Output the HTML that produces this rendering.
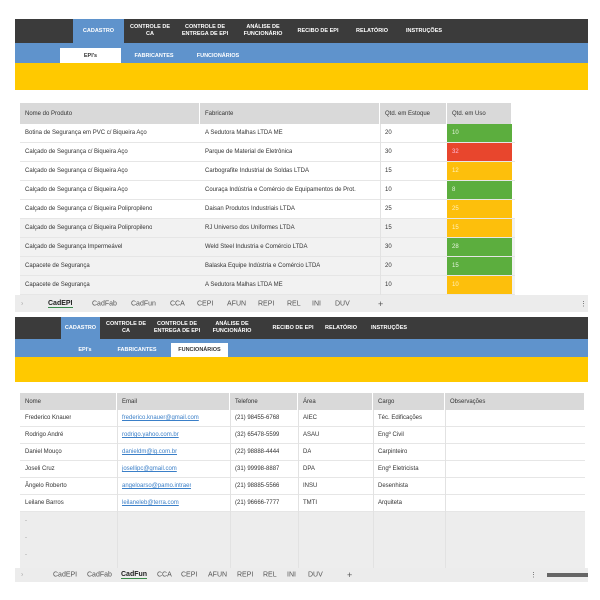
<!DOCTYPE html>
<html><head><meta charset="utf-8"><style>
*{margin:0;padding:0;box-sizing:border-box}
body{width:600px;height:600px;background:#fff;position:relative;overflow:hidden;font-family:"Liberation Sans",sans-serif;font-size:6px;color:#333}
.a{position:absolute}
.dark{background:#3b3b3b}
.blue{background:#5f93cc}
.yel{background:#ffc900}
.nav{color:#fff;font-weight:bold;font-size:5.5px;text-align:center;line-height:7px;display:flex;align-items:center;justify-content:center}
.sub{color:#fff;font-weight:bold;font-size:5.5px;display:flex;align-items:center;justify-content:center}
.hd{background:#d9d9d9;border-right:1px solid #fff;font-size:6px;padding-left:5px;display:flex;align-items:center}
.row{position:absolute;left:20px;border-bottom:1px solid #e6e6e6}
.c{position:absolute;top:0;height:100%;display:flex;align-items:center;padding-left:5px;white-space:nowrap;overflow:hidden}
.tabs{background:#ececec;font-size:7px;color:#555}
.tabs span{position:absolute;top:50%;transform:translateY(-50%)}
.lk{color:#3a7fc8;text-decoration:underline}
.vl{position:absolute;width:1px;background:#e2e2e2}
</style></head><body>

<!-- TOP PANEL -->
<div class="a dark" style="left:15px;top:19px;width:573px;height:24px"></div>
<div class="a blue nav" style="left:73px;top:19px;width:51px;height:24px">CADASTRO</div>
<div class="a nav" style="left:126px;top:19px;width:48px;height:24px">CONTROLE DE<br>CA</div>
<div class="a nav" style="left:178px;top:19px;width:54px;height:24px">CONTROLE DE<br>ENTREGA DE EPI</div>
<div class="a nav" style="left:238px;top:19px;width:50px;height:24px">ANÁLISE DE<br>FUNCIONÁRIO</div>
<div class="a nav" style="left:292px;top:19px;width:52px;height:24px">RECIBO DE EPI</div>
<div class="a nav" style="left:350px;top:19px;width:44px;height:24px">RELATÓRIO</div>
<div class="a nav" style="left:400px;top:19px;width:48px;height:24px">INSTRUÇÕES</div>
<div class="a blue" style="left:15px;top:43px;width:573px;height:20px"></div>
<div class="a sub" style="left:60px;top:48px;width:61px;height:15px;background:#fff;color:#333">EPI's</div>
<div class="a sub" style="left:125px;top:48px;width:58px;height:15px">FABRICANTES</div>
<div class="a sub" style="left:188px;top:48px;width:60px;height:15px">FUNCIONÁRIOS</div>
<div class="a yel" style="left:15px;top:63px;width:573px;height:27px"></div>

<div class="a hd" style="left:20px;top:103px;width:180px;height:21px">Nome do Produto</div>
<div class="a hd" style="left:200px;top:103px;width:180px;height:21px">Fabricante</div>
<div class="a hd" style="left:380px;top:103px;width:67px;height:21px">Qtd. em Estoque</div>
<div class="a hd" style="left:447px;top:103px;width:65px;height:21px">Qtd. em Uso</div>

<div class="row" style="top:124px;width:495px;height:19px"><div class="c" style="left:0">Botina de Segurança em PVC c/ Biqueira Aço</div><div class="c" style="left:180px">A Sedutora Malhas LTDA ME</div><div class="c" style="left:360px">20</div><div class="c" style="left:427px;width:65px;background:#5cae3e;color:#e8f5e0">10</div></div>
<div class="row" style="top:143px;width:495px;height:19px"><div class="c" style="left:0">Calçado de Segurança c/ Biqueira Aço</div><div class="c" style="left:180px">Parque de Material de Eletrônica</div><div class="c" style="left:360px">30</div><div class="c" style="left:427px;width:65px;background:#e8462d;color:#fbd">32</div></div>
<div class="row" style="top:162px;width:495px;height:19px"><div class="c" style="left:0">Calçado de Segurança c/ Biqueira Aço</div><div class="c" style="left:180px">Carbografite Industrial de Soldas LTDA</div><div class="c" style="left:360px">15</div><div class="c" style="left:427px;width:65px;background:#fdbf0c;color:#fff2c0">12</div></div>
<div class="row" style="top:181px;width:495px;height:19px"><div class="c" style="left:0">Calçado de Segurança c/ Biqueira Aço</div><div class="c" style="left:180px">Couraça Indústria e Comércio de Equipamentos de Prot.</div><div class="c" style="left:360px">10</div><div class="c" style="left:427px;width:65px;background:#5cae3e;color:#e8f5e0">8</div></div>
<div class="row" style="top:200px;width:495px;height:19px"><div class="c" style="left:0">Calçado de Segurança c/ Biqueira Polipropileno</div><div class="c" style="left:180px">Daisan Produtos Industriais LTDA</div><div class="c" style="left:360px">25</div><div class="c" style="left:427px;width:65px;background:#fdbf0c;color:#fff2c0">25</div></div>
<div class="row" style="top:219px;width:495px;height:19px;background:#f2f2f2"><div class="c" style="left:0">Calçado de Segurança c/ Biqueira Polipropileno</div><div class="c" style="left:180px">RJ Universo dos Uniformes LTDA</div><div class="c" style="left:360px">15</div><div class="c" style="left:427px;width:65px;background:#fdbf0c;color:#fff2c0">15</div></div>
<div class="row" style="top:238px;width:495px;height:19px;background:#f2f2f2"><div class="c" style="left:0">Calçado de Segurança Impermeável</div><div class="c" style="left:180px">Weld Steel Industria e Comércio LTDA</div><div class="c" style="left:360px">30</div><div class="c" style="left:427px;width:65px;background:#5cae3e;color:#e8f5e0">28</div></div>
<div class="row" style="top:257px;width:495px;height:19px;background:#f2f2f2"><div class="c" style="left:0">Capacete de Segurança</div><div class="c" style="left:180px">Balaska Equipe Indústria e Comércio LTDA</div><div class="c" style="left:360px">20</div><div class="c" style="left:427px;width:65px;background:#5cae3e;color:#e8f5e0">15</div></div>
<div class="row" style="top:276px;width:495px;height:19px;background:#f2f2f2"><div class="c" style="left:0">Capacete de Segurança</div><div class="c" style="left:180px">A Sedutora Malhas LTDA ME</div><div class="c" style="left:360px">10</div><div class="c" style="left:427px;width:65px;background:#fdbf0c;color:#fff2c0">10</div></div>
<div class="vl" style="left:380px;top:124px;height:171px"></div>

<div class="a tabs" style="left:15px;top:295px;width:573px;height:17px">
<span style="left:6px;color:#aaa">›</span>
<span style="left:33px;font-weight:bold;color:#222;border-bottom:1.5px solid #3a8a4a">CadEPI</span>
<span style="left:77px">CadFab</span><span style="left:116px">CadFun</span><span style="left:155px">CCA</span><span style="left:182px">CEPI</span><span style="left:212px">AFUN</span><span style="left:243px">REPI</span><span style="left:272px">REL</span><span style="left:297px">INI</span><span style="left:320px">DUV</span><span style="left:363px;font-size:9px">+</span><span style="left:565px">⋮</span></div>

<!-- BOTTOM PANEL -->
<div class="a dark" style="left:15px;top:317px;width:573px;height:22px"></div>
<div class="a blue nav" style="left:61px;top:317px;width:39px;height:22px">CADASTRO</div>
<div class="a nav" style="left:102px;top:317px;width:48px;height:22px">CONTROLE DE<br>CA</div>
<div class="a nav" style="left:150px;top:317px;width:54px;height:22px">CONTROLE DE<br>ENTREGA DE EPI</div>
<div class="a nav" style="left:200px;top:317px;width:64px;height:22px">ANÁLISE DE<br>FUNCIONÁRIO</div>
<div class="a nav" style="left:268px;top:317px;width:50px;height:22px">RECIBO DE EPI</div>
<div class="a nav" style="left:320px;top:317px;width:42px;height:22px">RELATÓRIO</div>
<div class="a nav" style="left:366px;top:317px;width:46px;height:22px">INSTRUÇÕES</div>
<div class="a blue" style="left:15px;top:339px;width:573px;height:18px"></div>
<div class="a sub" style="left:70px;top:343px;width:30px;height:14px">EPI's</div>
<div class="a sub" style="left:107px;top:343px;width:60px;height:14px">FABRICANTES</div>
<div class="a sub" style="left:171px;top:343px;width:57px;height:14px;background:#fff;color:#333">FUNCIONÁRIOS</div>
<div class="a yel" style="left:15px;top:357px;width:573px;height:25px"></div>

<div class="a hd" style="left:20px;top:393px;width:97px;height:17px">Nome</div>
<div class="a hd" style="left:117px;top:393px;width:113px;height:17px">Email</div>
<div class="a hd" style="left:230px;top:393px;width:68px;height:17px">Telefone</div>
<div class="a hd" style="left:298px;top:393px;width:75px;height:17px">Área</div>
<div class="a hd" style="left:373px;top:393px;width:72px;height:17px">Cargo</div>
<div class="a hd" style="left:445px;top:393px;width:140px;height:17px">Observações</div>

<div class="a" style="left:20px;top:512px;width:565px;height:56px;background:#ededed"></div>

<div class="row" style="top:410px;width:565px;height:17px"><div class="c" style="left:0">Frederico Knauer</div><div class="c lk" style="left:97px">frederico.knauer@gmail.com</div><div class="c" style="left:210px">(21) 98455-6768</div><div class="c" style="left:278px">AIEC</div><div class="c" style="left:353px">Téc. Edificações</div></div>
<div class="row" style="top:427px;width:565px;height:17px"><div class="c" style="left:0">Rodrigo André</div><div class="c lk" style="left:97px">rodrigo.yahoo.com.br</div><div class="c" style="left:210px">(32) 65478-5599</div><div class="c" style="left:278px">ASAU</div><div class="c" style="left:353px">Engº Civil</div></div>
<div class="row" style="top:444px;width:565px;height:17px"><div class="c" style="left:0">Daniel Mouço</div><div class="c lk" style="left:97px">danieldm@ig.com.br</div><div class="c" style="left:210px">(22) 98888-4444</div><div class="c" style="left:278px">DA</div><div class="c" style="left:353px">Carpinteiro</div></div>
<div class="row" style="top:461px;width:565px;height:17px"><div class="c" style="left:0">Joseli Cruz</div><div class="c lk" style="left:97px">josellipc@gmail.com</div><div class="c" style="left:210px">(31) 99998-8887</div><div class="c" style="left:278px">DPA</div><div class="c" style="left:353px">Engº Eletricista</div></div>
<div class="row" style="top:478px;width:565px;height:17px"><div class="c" style="left:0">Ângelo Roberto</div><div class="c lk" style="left:97px">angeloarso@pamo.intraer</div><div class="c" style="left:210px">(21) 98885-5566</div><div class="c" style="left:278px">INSU</div><div class="c" style="left:353px">Desenhista</div></div>
<div class="row" style="top:495px;width:565px;height:17px"><div class="c" style="left:0">Leilane Barros</div><div class="c lk" style="left:97px">leilaneleb@terra.com</div><div class="c" style="left:210px">(21) 96666-7777</div><div class="c" style="left:278px">TMTI</div><div class="c" style="left:353px">Arquiteta</div></div>

<div class="vl" style="left:117px;top:410px;height:158px"></div>
<div class="vl" style="left:230px;top:410px;height:158px"></div>
<div class="vl" style="left:298px;top:410px;height:158px"></div>
<div class="vl" style="left:373px;top:410px;height:158px"></div>
<div class="vl" style="left:445px;top:410px;height:158px"></div>
<div class="a" style="left:25px;top:518px;color:#999">-</div>
<div class="a" style="left:25px;top:535px;color:#999">-</div>
<div class="a" style="left:25px;top:552px;color:#999">-</div>

<div class="a tabs" style="left:15px;top:568px;width:573px;height:14px">
<span style="left:6px;color:#aaa">›</span>
<span style="left:38px">CadEPI</span><span style="left:72px">CadFab</span>
<span style="left:106px;font-weight:bold;color:#222;border-bottom:1.5px solid #3a8a4a">CadFun</span>
<span style="left:142px">CCA</span><span style="left:166px">CEPI</span><span style="left:193px">AFUN</span><span style="left:222px">REPI</span><span style="left:248px">REL</span><span style="left:272px">INI</span><span style="left:293px">DUV</span><span style="left:332px;font-size:9px">+</span><span style="left:515px">⋮</span>
<div class="a" style="left:532px;top:5px;width:41px;height:4px;background:#666"></div></div>
</body></html>
